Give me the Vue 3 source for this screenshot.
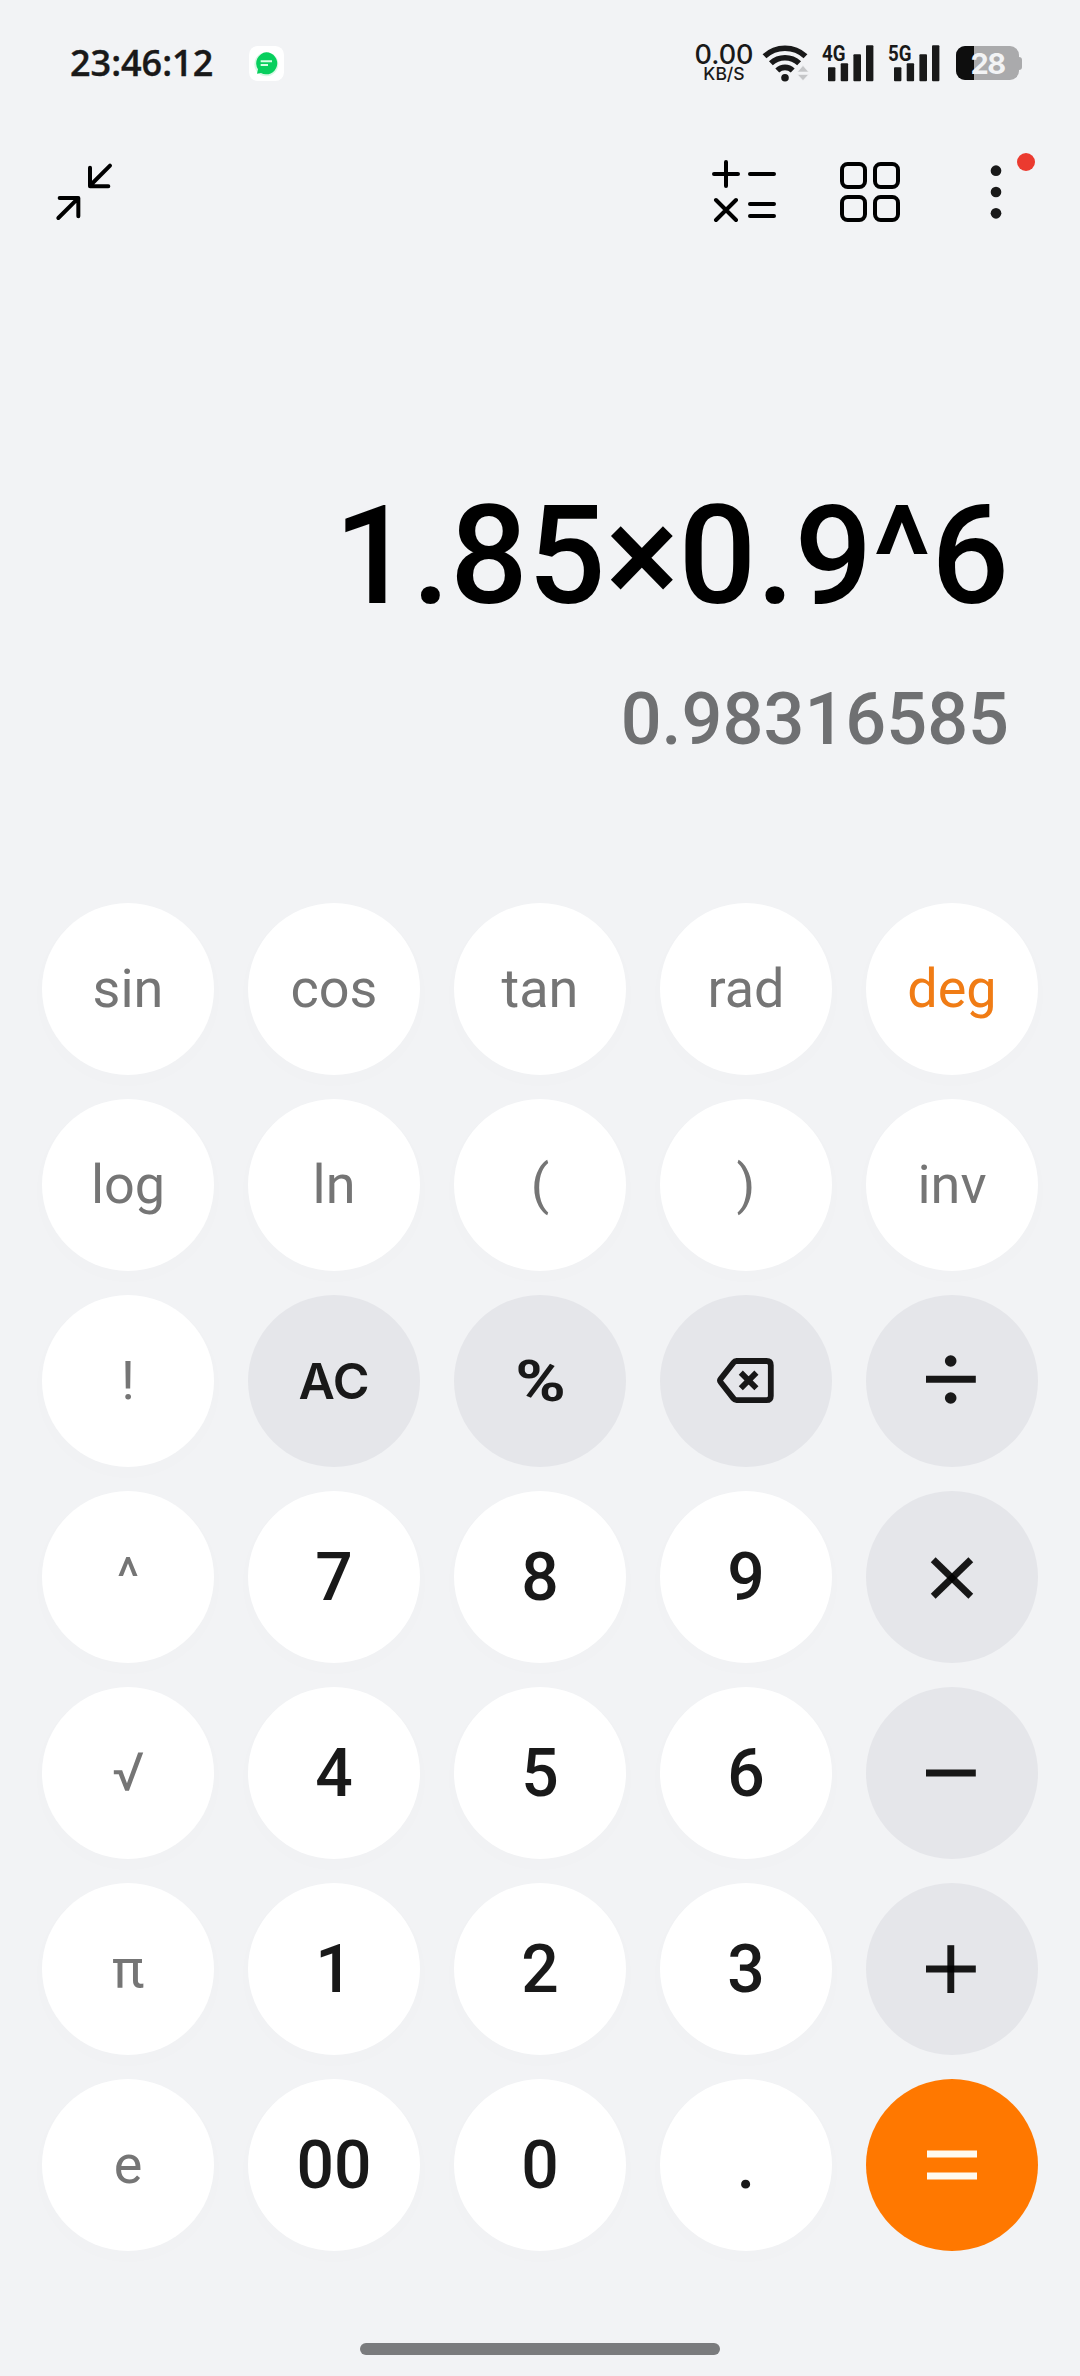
<!--
    Calculator screen, scientific layout
-->

<template>
  <div class="screen">
    <header class="status-bar">
      <div class="status-left">
        <span class="clock">{{ clock }}</span>
        <svg class="notification" viewBox="0 0 105 105">
          <rect width="105" height="105" rx="26" fill="#fff" />
          <circle cx="52" cy="55" r="36" fill="#d9f8e5" />
          <path d="M52 19a33 33 0 1 1-16 62l-12 2 3-13A33 33 0 0 1 52 19z" fill="#07cf5d" />
          <path d="M35 46h34M35 57h22" stroke="#d5ffe4" stroke-width="6" />
        </svg>
      </div>
      <div class="status-right">
        <div class="net-speed">
          <span class="speed-value">0.00</span>
          <span class="speed-unit">KB/S</span>
        </div>
        <svg class="wifi" viewBox="0 0 48 40">
          <g fill="none" stroke="#191919" stroke-width="5.6">
            <path d="M2.5 13.2a30.2 30.2 0 0 1 41 0" />
            <path d="M8.9 20.3a20.6 20.6 0 0 1 28.2 0" />
            <path d="M15.3 27.5a11 11 0 0 1 15.4 0" />
          </g>
          <circle cx="23" cy="34.7" r="3.8" fill="#191919" />
          <path d="M41 22.5l5.6 6.5h-11.2zM35.4 31.5h11.2L41 37.6z" fill="#c5c6c8" stroke="#f2f3f5" stroke-width=".6" />
        </svg>
        <svg v-for="net in networks" :key="net" class="signal" viewBox="0 0 52 40">
          <text x="0" y="17.5" textLength="23.5" lengthAdjust="spacingAndGlyphs">{{ net }}</text>
          <g fill="#191919">
            <rect x="6" y="24.3" width="7.4" height="14" rx="1" />
            <rect x="18.7" y="20.3" width="7.4" height="18" rx="1" />
            <rect x="31.4" y="11.3" width="7.6" height="27" rx="1" />
            <rect x="44" y="2.3" width="7.4" height="36" rx="1" />
          </g>
        </svg>
        <div class="battery">
          <div class="battery-body">
            <div class="battery-level" :style="{ width: battery + '%' }"></div>
            <span class="battery-text">{{ battery }}</span>
          </div>
          <div class="battery-cap"></div>
        </div>
      </div>
    </header>

    <nav class="toolbar">
      <svg class="tool-collapse" viewBox="0 0 360 360">
        <path d="M180 113v56h55M240 107l-58 58M89 204h56v55M141 208l-56 56" />
      </svg>
      <div class="tool-group">
        <svg class="tool" viewBox="0 0 360 360">
          <path d="M72 132h72M108 96v72M180 132h72M78 210l60 60M138 210l-60 60M180 222h72M180 258h72" />
        </svg>
        <svg class="tool" viewBox="0 0 360 360">
          <rect x="96" y="102" width="69" height="69" rx="17" />
          <rect x="195" y="102" width="69" height="69" rx="17" />
          <rect x="96" y="201" width="69" height="69" rx="17" />
          <rect x="195" y="201" width="69" height="69" rx="17" />
        </svg>
        <svg class="tool tool-menu" viewBox="0 0 390 360">
          <circle cx="198" cy="122" r="16" />
          <circle cx="198" cy="186" r="16" />
          <circle cx="198" cy="250" r="16" />
          <circle class="tool-dot" cx="288" cy="96" r="27" />
        </svg>
      </div>
    </nav>

    <section class="display">
      <div class="expression">{{ expression }}</div>
      <div class="result">{{ result }}</div>
    </section>

    <main class="keypad">
      <button v-for="key in keys" :key="key.label" class="key" :class="key.type">
        <svg v-if="key.icon" class="key-icon" viewBox="0 0 172 172">
          <template v-if="key.icon === 'backspace'">
            <path
              d="M76.5 66H106.5Q110.8 66 110.8 70.3V101Q110.8 105.2 106.5 105.2H76.5Q74.8 105.2 73.6 103.6L60.7 87.2Q59.3 85.5 60.7 83.8L73.6 67.6Q74.8 66 76.5 66Z"
              stroke-width="5.8"
            />
            <path d="M80.8 77.6l15.6 15.6M96.4 77.6l-15.6 15.6" stroke-width="5.8" />
          </template>
          <template v-else-if="key.icon === 'divide'">
            <path d="M60 84.3h49.8" />
            <circle cx="84.7" cy="66" r="5.8" />
            <circle cx="84.7" cy="103" r="5.8" />
          </template>
          <template v-else-if="key.icon === 'multiply'">
            <path d="M67.2 68.8l37.6 36.4" />
            <path d="M104.8 68.8L67.2 105.2" />
          </template>
          <path v-else-if="key.icon === 'minus'" d="M60 86h49.8" />
          <template v-else-if="key.icon === 'plus'">
            <path d="M60 86h49.8" />
            <path d="M84.8 62.2v47.8" />
          </template>
          <path v-else d="M61 75h50M61 97h50" />
        </svg>
        <span v-else class="key-label">{{ key.label }}</span>
      </button>
    </main>

    <div class="home-bar"></div>
  </div>
</template>

<script setup>
import { ref } from 'vue'

const clock = ref('23:46:12')
const battery = ref(28)
const networks = ['4G', '5G']

const expression = ref('1.85×0.9^6')
const result = ref('0.98316585')

const fn = (label) => ({ label, type: 'fn' })
const num = (label) => ({ label, type: 'num' })
const op = (label, icon) => ({ label, icon, type: 'op' })

// Keys go row by row, five in a row
const keys = [
  fn('sin'), fn('cos'), fn('tan'), fn('rad'), { label: 'deg', type: 'fn active' },
  fn('log'), fn('ln'), fn('('), fn(')'), fn('inv'),
  fn('!'), { label: 'AC', type: 'op clear' }, { label: '%', type: 'op percent' }, op('⌫', 'backspace'), op('÷', 'divide'),
  fn('^'), num('7'), num('8'), num('9'), op('×', 'multiply'),
  fn('√'), num('4'), num('5'), num('6'), op('−', 'minus'),
  fn('π'), num('1'), num('2'), num('3'), op('+', 'plus'),
  fn('e'), num('00'), num('0'), num('.'), { label: '=', icon: 'equals', type: 'equals' }
]
</script>

<style>
body {
  margin: 0;
  background: #f2f3f5;
}
</style>

<style scoped>
.screen {
  display: flex;
  flex-direction: column;
  width: 1080px;
  height: 2376px;
  background: #f2f3f5;
  font-family: Roboto, "Noto Sans", sans-serif;
  overflow: hidden;
}

/* Status bar */
.status-bar {
  display: flex;
  justify-content: space-between;
  align-items: center;
  box-sizing: border-box;
  height: 130px;
  padding: 0 58px 4px 70px;
  color: #191919;
}

.status-left,
.status-right {
  display: flex;
  align-items: center;
}

.clock {
  width: 179px;
  font: 600 36px/44px "Open Sans", sans-serif;
  -webkit-text-stroke: 0.4px #191919;
}

.notification {
  width: 35px;
  height: 35px;
}

.net-speed {
  display: flex;
  flex-direction: column;
  align-items: center;
  width: 60px;
  margin-right: 8px;
  font-family: Inter, sans-serif;
  font-weight: 500;
}

.speed-value {
  font-size: 27px;
  line-height: 20px;
}

.speed-unit {
  font-size: 17.5px;
  line-height: 17px;
}

.wifi {
  width: 48px;
  height: 40px;
  margin-right: 12px;
}

.signal {
  width: 52px;
  height: 40px;
  margin-right: 14px;
  overflow: visible;
}

.signal text {
  font: 700 22px Roboto, sans-serif;
  fill: #191919;
}

.battery {
  display: flex;
  align-items: center;
  margin-left: 2px;
}

.battery-body {
  position: relative;
  width: 63px;
  height: 34px;
  border-radius: 9px;
  background: #aaaaac;
  overflow: hidden;
}

.battery-level {
  height: 100%;
  background: #0e0e0e;
}

.battery-text {
  position: absolute;
  top: 0;
  left: 0;
  width: 100%;
  font: 700 29px/35px Inter, sans-serif;
  letter-spacing: -1.5px;
  text-align: center;
  color: #f2f3f5;
}

.battery-cap {
  width: 3px;
  height: 13px;
  border-radius: 0 3px 3px 0;
  background: #aaaaac;
}

/* Toolbar */
.toolbar {
  display: flex;
  justify-content: space-between;
  height: 120px;
  padding: 0 20px 0 30px;
}

.toolbar svg {
  width: 120px;
  height: 120px;
  fill: none;
  stroke: #000;
  stroke-width: 12;
  stroke-linecap: round;
  stroke-linejoin: round;
}

.tool-group {
  display: flex;
}

.toolbar .tool-menu {
  width: 130px;
  fill: #191919;
  stroke: none;
}

.tool-dot {
  fill: #eb3a2f;
}

/* Display */
.display {
  display: flex;
  flex-direction: column;
  align-items: flex-end;
  box-sizing: border-box;
  height: 653px;
  padding: 226px 71px 0 0;
  font-weight: 500;
}

.expression {
  font-size: 137px;
  line-height: 160px;
  color: #000;
}

.result {
  margin-top: 42px;
  font-size: 72px;
  line-height: 84px;
  color: #6f7072;
}

/* Keypad */
.keypad {
  display: grid;
  grid-template-columns: repeat(5, 172px);
  grid-auto-rows: 172px;
  gap: 24px 34px;
  padding: 0 42px;
}

.key {
  display: flex;
  justify-content: center;
  align-items: center;
  box-sizing: border-box;
  padding: 0;
  border: none;
  border-radius: 50%;
  background: #fff;
  font-family: inherit;
  font-size: 54px;
  color: #757575;
  box-shadow: 0 6px 28px rgba(30, 50, 60, 0.012);
}

.key.fn {
  padding-bottom: 2px;
}

.key.num {
  font-size: 66px;
  font-weight: 500;
  color: #191919;
}

.key.active {
  color: #f07c15;
}

.key.op {
  background: #e5e6ea;
  color: #191919;
  box-shadow: none;
}

.key.clear {
  font-family: Inter, sans-serif;
  font-size: 50px;
  font-weight: 600;
}

.key.percent {
  font-size: 58px;
  font-weight: 700;
}

.key.percent .key-label {
  transform: scaleX(1.18);
}

.key.equals {
  background: #ff7800;
  box-shadow: none;
}

.key-icon {
  width: 172px;
  height: 172px;
  fill: none;
  stroke: rgba(0, 0, 0, 0.9);
  stroke-width: 6.9;
}

.key-icon circle {
  fill: #191919;
  stroke: none;
}

.key.equals .key-icon {
  stroke: #fffaf0;
  stroke-width: 7.2;
}

.home-bar {
  align-self: center;
  width: 360px;
  height: 12px;
  margin-top: 92px;
  border-radius: 6px;
  background: #7a7b7d;
}
</style>
